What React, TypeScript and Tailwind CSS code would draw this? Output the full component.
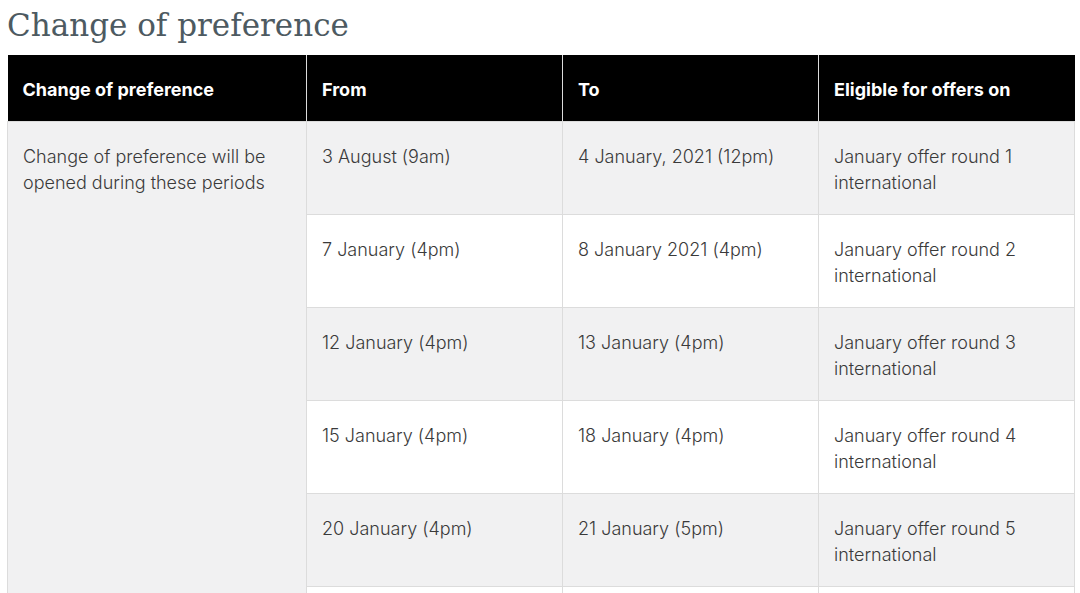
import React from 'react';

const ROWS = [
    { from: "3 August (9am)", to: "4 January, 2021 (12pm)", round: "January offer round 1" },
    { from: "7 January (4pm)", to: "8 January 2021 (4pm)", round: "January offer round 2" },
    { from: "12 January (4pm)", to: "13 January (4pm)", round: "January offer round 3" },
    { from: "15 January (4pm)", to: "18 January (4pm)", round: "January offer round 4" },
    { from: "20 January (4pm)", to: "21 January (5pm)", round: "January offer round 5" },
    { from: "25 January (4pm)", to: "26 January (4pm)", round: "January offer round 6" },
];

export default function App() {
    const cell = "border border-[#dcdcdc] align-top pl-[15px] pr-4 pt-[22px] pb-[18px] text-[18px] leading-[26px] font-light text-[#3a3a3a]";
    return (
        <div className="w-[1080px] h-[593px] overflow-hidden bg-white" style={{ fontFamily: "Inter, 'Liberation Sans', sans-serif" }}>
            <h2 className="pl-[7px] pt-[3px] h-[55px] text-[31px] leading-[44px] text-[#4d5a61]" style={{ fontFamily: "'DejaVu Serif', serif" }}>
                Change of preference
            </h2>
            <table className="ml-[7px] w-[1067px] border-collapse table-fixed">
                <colgroup>
                    <col className="w-[299px]" />
                    <col className="w-[256px]" />
                    <col className="w-[256px]" />
                    <col className="w-[256px]" />
                </colgroup>
                <thead>
                    <tr className="h-[66px] bg-black text-white text-left">
                        <th className="border-r border-[#dcdcdc] pl-[15px] pt-[3px] text-[18px] font-bold">Change of preference</th>
                        <th className="border-r border-[#dcdcdc] pl-[15px] pt-[3px] text-[18px] font-bold">From</th>
                        <th className="border-r border-[#dcdcdc] pl-[15px] pt-[3px] text-[18px] font-bold">To</th>
                        <th className="pl-[15px] pt-[3px] text-[18px] font-bold">Eligible for offers on</th>
                    </tr>
                </thead>
                <tbody>
                    {ROWS.map((r, i) => (
                        <tr key={i} className={i % 2 === 0 ? "bg-[#f1f1f2]" : "bg-white"}>
                            {i === 0 && (
                                <td rowSpan={ROWS.length} className={cell + " bg-[#f1f1f2]"}>
                                    Change of preference will be opened during these periods
                                </td>
                            )}
                            <td className={cell}>{r.from}</td>
                            <td className={cell}>{r.to}</td>
                            <td className={cell}>{r.round}<br />international</td>
                        </tr>
                    ))}
                </tbody>
            </table>
        </div>
    );
}
